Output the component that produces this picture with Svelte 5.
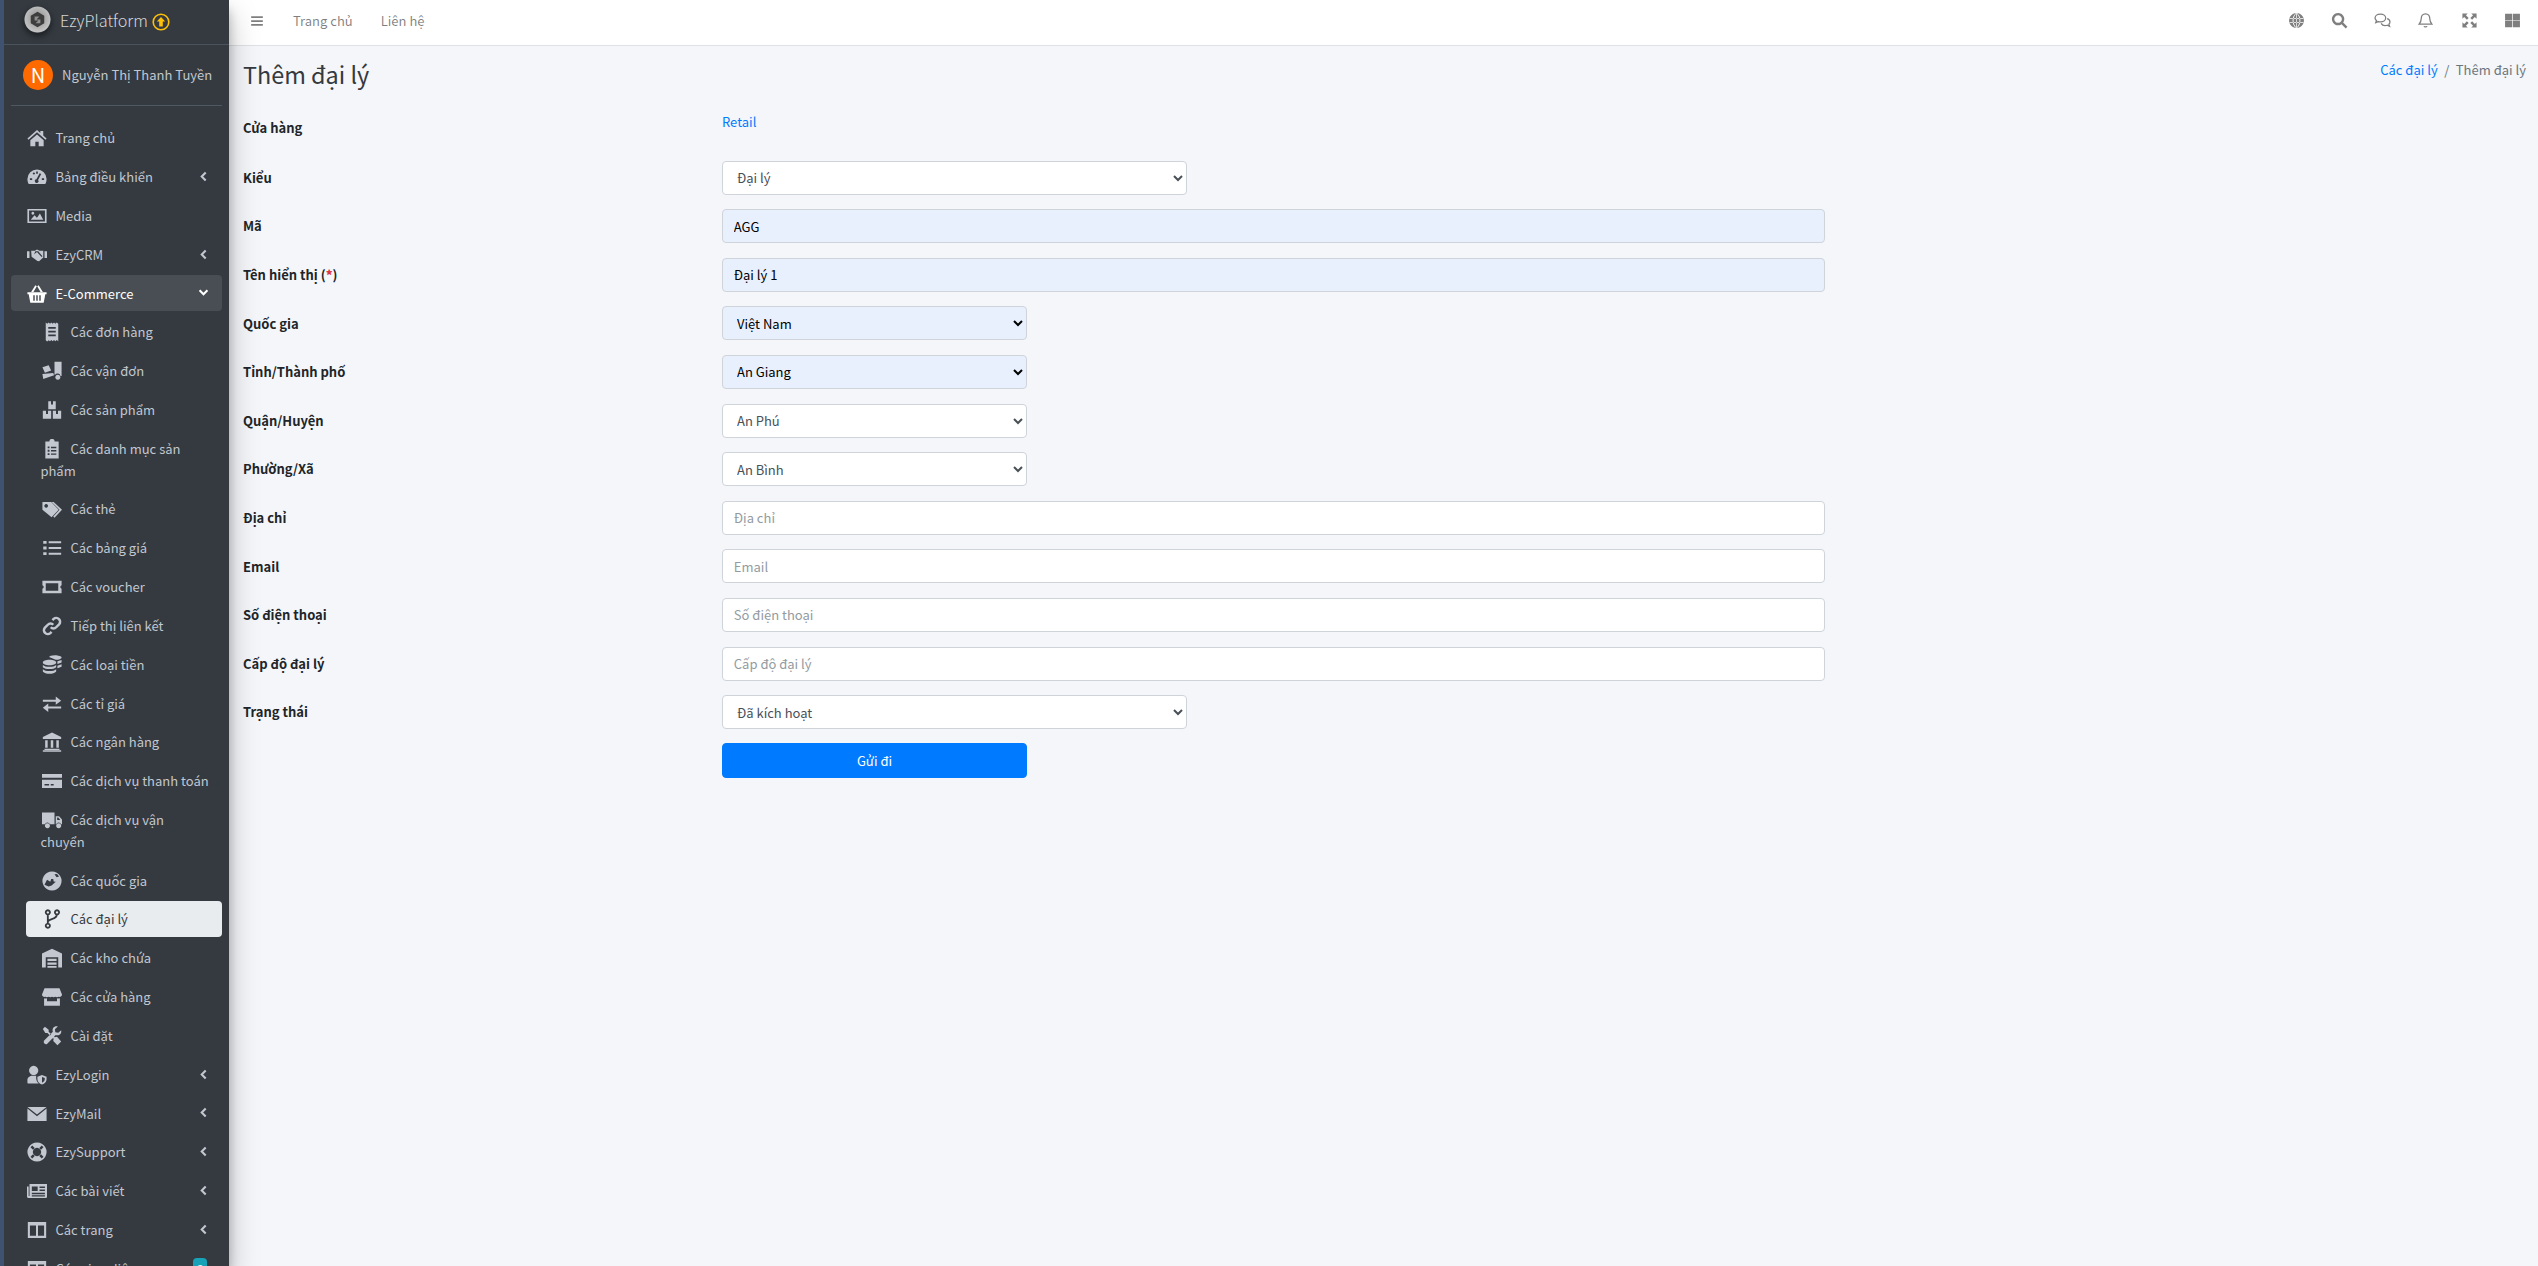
<script>
  const icons = {
    home: 'M12 2.500 .5 12.500l1.300 1.500L12 5l10.200 9 1.300-1.500L19.500 9V3.500h-3.500v2.500zM4 14.800V22h6v-5.500h4V22h6v-7.200L12 7.800z',
    gauge: 'M12 3A11.500 11.500 0 0 0 .5 14.500c0 2.300.6 4.300 1.600 6h19.800c1-1.700 1.600-3.700 1.600-6A11.500 11.500 0 0 0 12 3zM3.500 13.500h2.700v2.200H3.500zM6.700 7.500l1.700-1.300 1.400 1.800-1.600 1.300zM11 5.500h2V8h-2zM17.800 13.500h2.700v2.200h-2.700zM15.200 7.500l1.800 1-3.700 7a2.200 2.200 0 1 1-2-.7z',
    image: 'M.5 3.500h23v17H.5zM2.500 5.500v13h19v-13zM4.500 16.500 9 11l3 3 3.500-5 4 7.500zM7 7a1.700 1.700 0 1 0 .01 0z',
    handshake: 'M0 7.500h3v8H0zM21 7.500h3v8h-3zM5 7h4.500L12 5.500 15 7h4.500v8l-5 4.500-2-.3-2-1.500-5-3.700zM8.500 11l3.500-2.500 5.500 6 1-1-5-6h-3.500z',
    basket: 'M.5 10h23v2.200H22L20 22.500H4L2 12.200H.5zM7.500 13.500v6.500h1.800v-6.500zM11.100 13.500v6.500h1.800v-6.500zM14.700 13.500v6.500h1.800v-6.500zM5 9.500 10 1.500l1.800 1.100L7.700 9.500zM19 9.500 14 1.500l-1.800 1.100 4.100 6.900z',
    receipt: 'M4.500 .5l1.700 1.500L8 .5l1.600 1.500L11.200 .5l1.600 1.500L14.400 .5l1.600 1.500L17.600 .5l1.900 1.500v21l-1.900-1.500-1.600 1.500-1.600-1.500-1.600 1.500-1.600-1.500-1.600 1.500L8 22l-1.800 1.500L4.500 22zM7.500 6v2.200h9V6zM7.500 10.500v2.200h9v-2.200zM7.500 15v2.200h9V15z',
    dolly: 'M15 1h8.500v17h-1.300a3.600 3.600 0 0 0-6.500-1.500H15zM19 16.500a3 3 0 1 0 .01 0zM.5 7.500l7.500-2.500 3 6.500-7.500 2.500zM.5 15.500l13-1 1 2.500-13 4.500z',
    boxes: 'M7.500 1.500h9V11h-9zM10.800 1.500v3.800h2.400V1.500zM1 13h10v9.500H1zM4.800 13v3.800h2.400V13zM13 13h10v9.500H13zM16.800 13v3.800h2.400V13z',
    clipboard: 'M4 3H8.800a3.200 3.200 0 0 1 6.400 0H20V23.500H4zM6.800 9v2.200H9V9zM10.800 9.300v1.700h6.400V9.300zM6.800 13v2.200H9V13zM10.800 13.300V15h6.400v-1.700zM6.800 17v2.200H9V17zM10.800 17.300V19h6.400v-1.700z',
    tags: 'M.5 3.500H11l9 9.500-8.500 9L.5 13zM5 6a2.200 2.200 0 1 0 .01 0zM14 3.500 24 13l-9 9.500-1.500-1.500 7.500-8L11.500 3.500z',
    list: 'M1.500 3.500h4v3.500h-4zM8 4h15v2.300H8zM1.500 10.200h4v3.500h-4zM8 10.800h15v2.300H8zM1.500 17h4v3.500h-4zM8 17.700h15V20H8z',
    ticket: 'M.5 4.500h23V10a2.200 2.200 0 0 0 0 4.200v5.300H.5v-5.300a2.200 2.200 0 0 0 0-4.200zM4.500 7.500v9h15v-9z',
    coins: 'M1 9c0-2 3.500-3.300 8-3.300S17 7 17 9s-3.500 3.300-8 3.300S1 11 1 9zM1 12c1.500 1.500 4.500 2.200 8 2.200s6.500-.7 8-2.200v2.700c-1.500 1.500-4.500 2.200-8 2.200s-6.500-.7-8-2.200zM1 17c1.500 1.500 4.500 2.200 8 2.200s6.500-.7 8-2.200v2.700c-1.500 1.500-4.500 2.800-8 2.800s-6.500-1.300-8-2.800zM8.500 2.500c0-1 3-2.200 7-2.200s8 1.200 8 2.700-3.500 2.800-7 2.800zM18.500 7.500 23.500 6v3l-5 1.800zM18.500 12.800l5-1.800v3l-5 1.800z',
    exchange: 'M1 7h15.500V3L23 8l-6.500 5V9.300H1zM23 15H7.500v-3.500L1 16.500l6.500 5v-4H23z',
    bank: 'M12 .5 1 6v2.500h22V6zM3 20h18v1.500H3zM1 22h22v1.800H1zM3.800 9.800h3v9h-3zM10.500 9.800h3v9h-3zM17.200 9.800h3v9h-3z',
    card: 'M0 3.500h24v4.500H0zM0 10.500h24V20.500H0zM3 15.500V17.300h5.500v-1.800zM10.500 15.500v1.800h3.500v-1.800z',
    truck: 'M0 3h15v14H9.500a3.300 3.300 0 0 0-6 0H0zM16.500 7.500H20.500l3.500 4v5.500h-1a3.300 3.300 0 0 0-6 0h-.5zM18.200 9v3H22l-2.500-3zM6.500 16a3 3 0 1 0 .01 0zM20 16a3 3 0 1 0 .01 0z',
    globeAsia: 'M12 .5a11.500 11.500 0 1 0 .01 0zM3 16.500l3-6 4 2.500 1-3.500 2.500 0 .5 3 2.500 .5-5 4.500-3.500 1zM15 4l3-.5 2.500 3-3 1z',
    warehouse: 'M12 1 0 6.500V23.500h4.500V11h15v12.500H24V6.500zM6.500 13v2.700h11V13zM6.500 17.300V20h11v-2.700zM6.500 21.600v2h11v-2z',
    store: 'M3 1.500h18l3 7.500a3 3 0 0 1-4 2.800 4 4 0 0 1-4 0 4 4 0 0 1-4 0 4 4 0 0 1-4 0 4 4 0 0 1-4 0A3 3 0 0 1 0 9zM2.500 13.500c1.200.3 2.300.3 3.500 0V17h12v-3.500c1.200.3 2.300.3 3.500 0V22.500h-19z',
    tools: 'M1 3.500 3.500 1 8 4.500V7l3 3-1.500 1.500-3-3H4zM13 14.500l1.500-1.500.5.5 3-.5 5 5.500-4.500 4.500-5-5 .5-3zM23 5c.5 2.500-.3 4.500-2 5.500-1.500.8-3 .8-4.500.3L6 21.500a2.800 2.800 0 0 1-3.700-3.700L13 7c-.5-1.500-.5-3 .3-4.500C14.500.8 16.500 0 19 .5L15.500 4l.5 3.500 3.500.5z',
    userShield: 'M8 1a5.500 5.500 0 1 0 .01 0zM.5 21.500v-3.500c0-3 3-5 6-5h4.500v3c0 2.200 1 4.200 3 6.200H1.200zM18 12l5.500 2v3.200c0 3-2.200 5.300-5.500 6.300-3.300-1-5.500-3.300-5.500-6.300V14zM18 14.300V21.300c2-.8 3.300-2.300 3.300-4.100v-1.700z',
    envelope: 'M.5 3.500h23L12 12.500zM.5 5.500 12 14.800 23.500 5.500V20.500H.5z',
    lifeRing: 'M12 .5a11.500 11.500 0 1 0 .01 0zM12 7a5 5 0 1 1-.01 0zM4.200 6.300l2.100-2.100 3 3-2.100 2.100zM17.700 4.200l2.100 2.100-3 3-2.100-2.100zM19.800 17.700l-2.100 2.100-3-3 2.100-2.100zM6.300 19.800l-2.100-2.100 3-3 2.100 2.100z',
    newspaper: 'M3 3.500h21v15.500a1.500 1.500 0 0 1-1.500 1.500H2A2 2 0 0 1 0 18.500V6.500h2v11.500h1zM5.800 6.500v5.500h7V6.500zM15 6.500v1.800h6.500V6.500zM15 10.200v1.800h6.500v-1.800zM5.800 14v1.800h15.700V14zM5.800 17v1.500h15.700V17z',
    columns: 'M1 2.500h22v19H1zM3.500 6.500v12.500h7.300V6.500zM13.200 6.500v12.500h7.300V6.500z',
    bars: 'M2 4h20v3H2zM2 10.500h20v3H2zM2 17h20v3H2z',
    globe: 'M12 1.500a10.500 10.500 0 1 0 .01 0zM1.500 8.600h21v1.100h-21zM1.500 14.300h21v1.100h-21zM11.500 1.500h1v21h-1zM6.500 12c0-4.500 1.800-8 4.500-10.300l.5.5C9.300 4.500 7.800 8 7.800 12s1.500 7.500 3.700 9.800l-.5.5C8.300 20 6.500 16.500 6.500 12zM17.500 12c0-4.500-1.800-8-4.500-10.300l-.5.5c2.200 2.300 3.700 5.800 3.700 9.800s-1.500 7.500-3.700 9.800l.5.5c2.700-2.300 4.500-5.800 4.500-10.300z',
    expand: 'M2 2h7.500L7 4.500l3.800 3.800-2.500 2.500L4.500 7 2 9.500zM22 2v7.500L19.500 7l-3.800 3.800-2.500-2.500L17 4.500 14.500 2zM22 22h-7.500l2.500-2.500-3.800-3.800 2.500-2.500L19.500 17l2.500-2.500zM2 22v-7.500L4.500 17l3.800-3.800 2.500 2.500L7 19.500 9.500 22z',
    grid: 'M1.500 2.500h10v9h-10zM12.500 2.500h10v9h-10zM1.500 12.500h10v9h-10zM12.500 12.500h10v9h-10z',
    link: 'M10.500 13.500a4.500 4.500 0 0 0 6.500 0l3.500-3.500a4.600 4.600 0 0 0-6.500-6.500l-1.500 1.500M13.500 10.500a4.500 4.500 0 0 0-6.500 0L3.500 14a4.600 4.600 0 0 0 6.500 6.500l1.500-1.500',
    branch: 'M7 6v12M7 15.500c1-4.500 11-2 11-9.500M7 1.500a2.500 2.500 0 1 0 .01 0zM7 17.500a2.500 2.500 0 1 0 .01 0zM18 1.500a2.500 2.500 0 1 0 .01 0z',
    search: 'M10 3a7 7 0 1 0 .01 0zM15 15l7 7',
    comments: 'M9 3c4.500 0 7.500 2.500 7.500 5.500S13.500 14 9 14c-1 0-2-.1-3-.5L2.500 15l1-3C2 11 1.500 9.800 1.500 8.500 1.500 5.500 4.500 3 9 3zM18.500 9.500c2.500.7 4 2.500 4 4.500 0 1.200-.5 2.300-1.500 3.200l1 3-3.500-1.500c-3.500 1-7-.2-8.500-2.700',
    bell: 'M12 2.500c-4 0-6 3-6 6.500 0 4-1.500 6-3 8h18c-1.500-2-3-4-3-8 0-3.500-2-6.500-6-6.500zM10 20c.3 1.500 3.700 1.500 4 0'
  };
  const strokeWidths = { link: 3, branch: 2.2, search: 3.4, comments: 1.8, bell: 1.8 };

  const menu = [
    { icon: 'home', label: 'Trang chủ' },
    { icon: 'gauge', label: 'Bảng điều khiển', arrow: true },
    { icon: 'image', label: 'Media' },
    { icon: 'handshake', label: 'EzyCRM', arrow: true },
    { icon: 'basket', label: 'E-Commerce', open: true },
    { icon: 'receipt', label: 'Các đơn hàng', child: true },
    { icon: 'dolly', label: 'Các vận đơn', child: true },
    { icon: 'boxes', label: 'Các sản phẩm', child: true },
    { icon: 'clipboard', label: 'Các danh mục sản phẩm', child: true },
    { icon: 'tags', label: 'Các thẻ', child: true },
    { icon: 'list', label: 'Các bảng giá', child: true },
    { icon: 'ticket', label: 'Các voucher', child: true },
    { icon: 'link', label: 'Tiếp thị liên kết', child: true },
    { icon: 'coins', label: 'Các loại tiền', child: true },
    { icon: 'exchange', label: 'Các tỉ giá', child: true },
    { icon: 'bank', label: 'Các ngân hàng', child: true },
    { icon: 'card', label: 'Các dịch vụ thanh toán', child: true },
    { icon: 'truck', label: 'Các dịch vụ vận chuyển', child: true },
    { icon: 'globeAsia', label: 'Các quốc gia', child: true },
    { icon: 'branch', label: 'Các đại lý', child: true, active: true },
    { icon: 'warehouse', label: 'Các kho chứa', child: true },
    { icon: 'store', label: 'Các cửa hàng', child: true },
    { icon: 'tools', label: 'Cài đặt', child: true },
    { icon: 'userShield', label: 'EzyLogin', arrow: true },
    { icon: 'envelope', label: 'EzyMail', arrow: true },
    { icon: 'lifeRing', label: 'EzySupport', arrow: true },
    { icon: 'newspaper', label: 'Các bài viết', arrow: true },
    { icon: 'columns', label: 'Các trang', arrow: true },
    { icon: 'columns', label: 'Các giao diện', badge: true }
  ];

  const topIcons = ['globe', 'search', 'comments', 'bell', 'expand', 'grid'];

  const rows = [
    { label: 'Kiểu', kind: 'select', size: 'mid', value: 'Đại lý' },
    { label: 'Mã', kind: 'input', value: 'AGG', filled: true },
    { label: 'Tên hiển thị', required: true, kind: 'input', value: 'Đại lý 1', filled: true },
    { label: 'Quốc gia', kind: 'select', size: 'small', value: 'Việt Nam', filled: true },
    { label: 'Tỉnh/Thành phố', kind: 'select', size: 'small', value: 'An Giang', filled: true },
    { label: 'Quận/Huyện', kind: 'select', size: 'small', value: 'An Phú' },
    { label: 'Phường/Xã', kind: 'select', size: 'small', value: 'An Bình' },
    { label: 'Địa chỉ', kind: 'input', placeholder: 'Địa chỉ' },
    { label: 'Email', kind: 'input', placeholder: 'Email' },
    { label: 'Số điện thoại', kind: 'input', placeholder: 'Số điện thoại' },
    { label: 'Cấp độ đại lý', kind: 'input', placeholder: 'Cấp độ đại lý' },
    { label: 'Trạng thái', kind: 'select', size: 'mid', value: 'Đã kích hoạt' }
  ];
</script>

{#snippet icon(name)}
  <svg class="ico" viewBox="0 0 24 24" aria-hidden="true">
    {#if strokeWidths[name]}
      <path d={icons[name]} fill="none" stroke="currentColor" stroke-width={strokeWidths[name]} />
    {:else}
      <path d={icons[name]} fill="currentColor" fill-rule="evenodd" />
    {/if}
  </svg>
{/snippet}

<div class="page">
  <aside class="sidebar">
    <div class="brand">
      <svg class="logo" viewBox="0 0 28 28" aria-hidden="true">
        <defs>
          <radialGradient id="lg" cx="50%" cy="45%" r="55%">
            <stop offset="0%" stop-color="#8d8d8d" />
            <stop offset="100%" stop-color="#c6c6c6" />
          </radialGradient>
        </defs>
        <circle cx="14" cy="14" r="13.500" fill="url(#lg)" />
        <path d="M7 10l7-4 7 4v8l-7 4-7-4z" fill="#3d3d3d" />
        <path d="M11 11h5l-3 3h4v4h-5l3-3h-4z" fill="#8f8f8f" />
      </svg>
      <span class="brand-text">EzyPlatform</span>
      <svg class="upgrade" viewBox="0 0 18 18" aria-hidden="true">
        <circle cx="9" cy="9" r="7.800" fill="none" stroke="#ffc107" stroke-width="1.600" />
        <path d="M9 4l4.200 4.500h-2.400V13.500H7.200V8.500H4.800z" fill="#ffc107" />
      </svg>
    </div>
    <div class="user">
      <span class="avatar">N</span>
      <span class="user-name">Nguyễn Thị Thanh Tuyền</span>
    </div>
    <nav class="menu">
      {#each menu as item}
        <a href="#/" class="item" class:child={item.child} class:open={item.open} class:active={item.active}>
          {@render icon(item.icon)}<span>{item.label}</span>
          {#if item.arrow}
            <svg class="chev" viewBox="0 0 8 12"><path d="M6.500 1.500 2 6l4.500 4.500" fill="none" stroke="currentColor" stroke-width="2.400" /></svg>
          {/if}
          {#if item.open}
            <svg class="chev down" viewBox="0 0 12 8"><path d="M1.500 1.500 6 6l4.500-4.500" fill="none" stroke="currentColor" stroke-width="2.400" /></svg>
          {/if}
          {#if item.badge}
            <span class="badge">8</span>
          {/if}
        </a>
      {/each}
    </nav>
  </aside>

  <div class="main">
    <header class="topbar">
      <a href="#/" class="burger">{@render icon('bars')}</a>
      <a href="#/" class="top-link">Trang chủ</a>
      <a href="#/" class="top-link">Liên hệ</a>
      <div class="top-icons">
        {#each topIcons as name}
          <a href="#/" class="top-icon">{@render icon(name)}</a>
        {/each}
      </div>
    </header>

    <section class="content">
      <div class="head">
        <h1>Thêm đại lý</h1>
        <ol class="crumbs">
          <li><a href="#/">Các đại lý</a></li>
          <li class="sep">/</li>
          <li>Thêm đại lý</li>
        </ol>
      </div>

      <form class="form" onsubmit={(e) => e.preventDefault()}>
        <div class="row store-row">
          <label for="store">Cửa hàng</label>
          <a id="store" href="#/" class="retail">Retail</a>
        </div>
        {#each rows as row, i}
          <div class="row">
            <label for={'f' + i}>{row.label}{#if row.required}&nbsp;(<b>*</b>){/if}</label>
            {#if row.kind === 'select'}
              <select id={'f' + i} class="control {row.size}" class:filled={row.filled}>
                <option>{row.value}</option>
              </select>
            {:else}
              <input id={'f' + i} class="control" class:filled={row.filled} value={row.value ?? ''} placeholder={row.placeholder ?? ''} />
            {/if}
          </div>
        {/each}
        <div class="row">
          <span></span>
          <button type="submit" class="send">Gửi đi</button>
        </div>
      </form>
    </section>
  </div>
</div>

<style>
  :global(body) {
    margin: 0;
    font-family: "Noto Sans CJK SC", "Noto Sans", sans-serif;
    font-size: 13px;
    line-height: 21.600px;
    color: #212529;
  }

  a {
    text-decoration: none;
  }

  .page {
    display: flex;
    height: 100vh;
    overflow: hidden;
    background: #f4f6f9;
  }

  .sidebar {
    width: 225px;
    flex: none;
    border-left: 4px solid #3f5270;
    background: #343a40;
    color: #c2c7d0;
    box-shadow: 0 14px 28px rgba(0, 0, 0, 0.25), 0 10px 10px rgba(0, 0, 0, 0.22);
    position: relative;
    z-index: 2;
    overflow: hidden;
  }

  .brand {
    height: 45px;
    box-sizing: border-box;
    border-bottom: 1px solid #4b545c;
    display: flex;
    align-items: center;
    padding: 0 0 3px 20px;
  }

  .logo {
    width: 27px;
    height: 27px;
    border-radius: 50%;
    box-shadow: 0 3px 6px rgba(0, 0, 0, 0.5);
    margin-right: 9px;
    margin-top: -2px;
  }

  .brand-text {
    font-size: 16.200px;
    font-weight: 300;
    color: rgba(255, 255, 255, 0.8);
  }

  .upgrade {
    width: 18px;
    height: 18px;
    margin-left: 4px;
    margin-top: 2px;
  }

  .user {
    margin: 0 7px;
    height: 61px;
    box-sizing: border-box;
    border-bottom: 1px solid #4f5962;
    display: flex;
    align-items: center;
    padding: 0 0 1px 12px;
  }

  .avatar {
    width: 30px;
    height: 30px;
    border-radius: 50%;
    background: #ff6a00;
    color: #fff;
    font-size: 20px;
    display: flex;
    align-items: center;
    justify-content: center;
    margin-right: 9px;
    flex: none;
  }

  .user-name {
    white-space: nowrap;
  }

  .menu {
    padding: 14px 7px 0;
  }

  .item {
    display: block;
    position: relative;
    padding: 7.200px 13px 7.200px 14.400px;
    margin-bottom: 2.880px;
    border-radius: 4px;
    color: #c2c7d0;
  }

  .item.child {
    margin-left: 15px;
  }

  .item.open {
    background: rgba(255, 255, 255, 0.1);
    color: #fff;
  }

  .item.active {
    background: #e9ecef;
    color: #343a40;
  }

  .ico {
    display: inline-block;
    width: 20px;
    height: 20px;
    vertical-align: -5px;
    margin: 0 8px 0 2px;
  }

  .chev {
    position: absolute;
    right: 15px;
    top: 12px;
    width: 7px;
    height: 11px;
  }

  .chev.down {
    right: 13px;
    top: 14px;
    width: 11px;
    height: 7px;
  }

  .badge {
    position: absolute;
    right: 15px;
    top: 7px;
    width: 14px;
    height: 18px;
    border-radius: 4px;
    background: #17a2b8;
    color: #fff;
    font-size: 11px;
    text-align: center;
  }

  .main {
    flex: 1;
    min-width: 0;
  }

  .topbar {
    height: 46px;
    box-sizing: border-box;
    background: #fff;
    border-bottom: 1px solid #dee2e6;
    display: flex;
    align-items: center;
    padding: 0 17px 4px 21px;
  }

  .burger {
    color: rgba(0, 0, 0, 0.5);
    margin-right: 29px;
    line-height: 0;
  }

  .burger .ico {
    width: 14px;
    height: 14px;
    margin: 0;
    vertical-align: baseline;
  }

  .top-link {
    color: rgba(0, 0, 0, 0.5);
    margin-right: 28px;
  }

  .top-icons {
    margin-left: auto;
    display: flex;
    gap: 26.300px;
  }

  .top-icon {
    color: rgba(0, 0, 0, 0.5);
    line-height: 0;
  }

  .top-icon .ico {
    width: 17px;
    height: 17px;
    margin: 0;
    vertical-align: baseline;
  }

  .content {
    padding: 0 12px 0 14px;
  }

  .head {
    display: flex;
    justify-content: space-between;
    align-items: flex-start;
    padding-top: 13px;
    height: 61px;
    box-sizing: border-box;
  }

  h1 {
    margin: 0;
    font-size: 23.400px;
    font-weight: 400;
    line-height: 30px;
    color: #343a40;
  }

  .crumbs {
    list-style: none;
    margin: 0;
    padding: 0;
    display: flex;
    color: #6c757d;
    gap: 6.500px;
  }

  .crumbs a,
  .retail {
    color: #007bff;
  }

  .form {
    width: 1582px;
  }

  .row {
    display: grid;
    grid-template-columns: 479px 1103px;
    align-items: center;
    margin-bottom: 14.600px;
  }

  .store-row {
    height: 39px;
    align-items: start;
  }

  .store-row label {
    padding-top: 10px;
  }

  .retail {
    justify-self: start;
    padding-top: 4px;
  }

  label {
    font-weight: 700;
  }

  label b {
    color: #dc3545;
  }

  .control {
    box-sizing: border-box;
    height: 34px;
    width: 100%;
    border: 1px solid #ced4da;
    border-radius: 4px;
    background: #fff;
    color: #495057;
    font: inherit;
    padding: 0 10.800px;
    outline: none;
  }

  select.control {
    padding: 0 10px;
  }

  .control.mid {
    width: 465px;
  }

  .control.small {
    width: 305px;
  }

  .control.filled {
    background: #e8f0fe;
    color: #000;
  }

  .control::placeholder {
    color: #939ba2;
  }

  .send {
    width: 305px;
    height: 35px;
    border: 1px solid #007bff;
    border-radius: 4px;
    background: #007bff;
    color: #fff;
    font: inherit;
    padding: 0;
    margin-top: -0.500px;
  }
</style>
